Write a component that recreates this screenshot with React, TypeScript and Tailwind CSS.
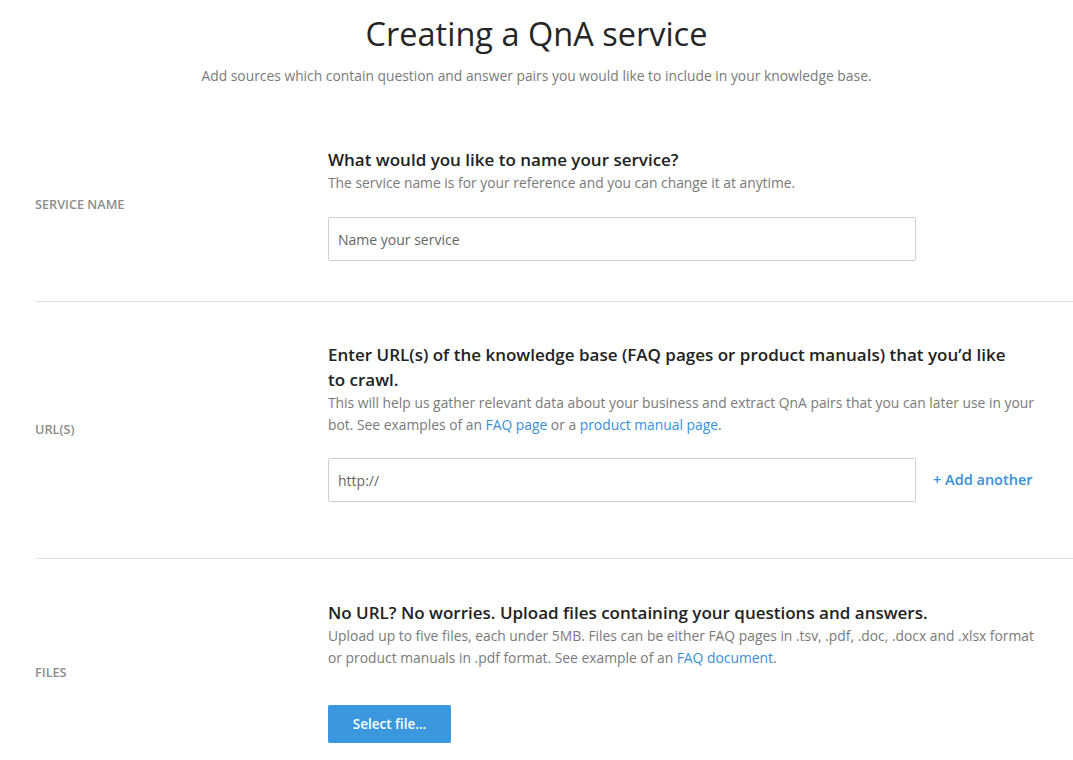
import React from 'react'

const font = { fontFamily: '"Open Sans", "Noto Sans", sans-serif' }

function Row({
  label,
  className,
  bodyClass,
  children,
}: {
  label: string
  className?: string
  bodyClass?: string
  children: React.ReactNode
}) {
  return (
    <section className={`flex ${className ?? ''}`}>
      <div className="w-[293px] shrink-0 flex items-center text-[12.7px] font-semibold uppercase text-[#8c8c8c]">
        {label}
      </div>
      <div className={`w-[712px] ${bodyClass ?? ''}`}>{children}</div>
    </section>
  )
}

function Heading({ children }: { children: React.ReactNode }) {
  return <h2 className="max-w-[695px] text-[17px] font-semibold leading-[25px] text-[#222]">{children}</h2>
}

function Desc({ children }: { children: React.ReactNode }) {
  return <p className="text-[13.85px] leading-[22px] text-[#7a7a7a]">{children}</p>
}

function Link({ children }: { children: React.ReactNode }) {
  return <a className="text-[#3a8fd9] cursor-pointer">{children}</a>
}

export default function App() {
  return (
    <div className="min-h-[760px] w-[1073px] bg-white overflow-hidden" style={font}>
      <header className="pt-[12px] text-center">
        <h1 className="text-[32.5px] leading-[44px] text-[#262626]">Creating a QnA service</h1>
        <p className="mt-[10px] text-[13.85px] leading-[20px] text-[#7a7a7a]">
          Add sources which contain question and answer pairs you would like to include in your knowledge base.
        </p>
      </header>

      <div className="ml-[35px] mt-[23px]">
        <Row label="Service name" className="border-b border-[#e3e3e3]" bodyClass="pt-[38px] pb-[40px]">
          <Heading>What would you like to name your service?</Heading>
          <Desc>The service name is for your reference and you can change it at anytime.</Desc>
          <input
            placeholder="Name your service"
            className="mt-[23px] h-[44px] w-[588px] rounded-[2px] border border-[#cfcfcf] px-[9px] text-[14px] text-[#333] placeholder:text-[#666] outline-none"
          />
        </Row>

        <Row label="URL(s)" className="border-b border-[#e3e3e3]" bodyClass="pt-[40px] pb-[56px]">
          <Heading>
            Enter URL(s) of the knowledge base (FAQ pages or product manuals) that you’d like to crawl.
          </Heading>
          <Desc>
            This will help us gather relevant data about your business and extract QnA pairs that you can later use in your
            bot. See examples of an <Link>FAQ page</Link> or a <Link>product manual page</Link>.
          </Desc>
          <div className="mt-[22px] flex items-center">
            <input
              placeholder="http://"
              className="h-[44px] w-[588px] rounded-[2px] border border-[#cfcfcf] px-[9px] text-[14px] text-[#333] placeholder:text-[#666] outline-none"
            />
            <a className="ml-[17px] text-[14.5px] font-semibold text-[#3a8fd9] cursor-pointer">+ Add another</a>
          </div>
        </Row>

        <Row label="Files" bodyClass="pt-[41px] pb-[43px]">
          <Heading>No URL? No worries. Upload files containing your questions and answers.</Heading>
          <Desc>
            Upload up to five files, each under 5MB. Files can be either FAQ pages in .tsv, .pdf, .doc, .docx and .xlsx format
            or product manuals in .pdf format. See example of an <Link>FAQ document</Link>.
          </Desc>
          <button className="mt-[36px] h-[38px] w-[123px] rounded-[2px] bg-[#3b97de] text-[13.5px] font-semibold text-white">
            Select file...
          </button>
        </Row>
      </div>
    </div>
  )
}
